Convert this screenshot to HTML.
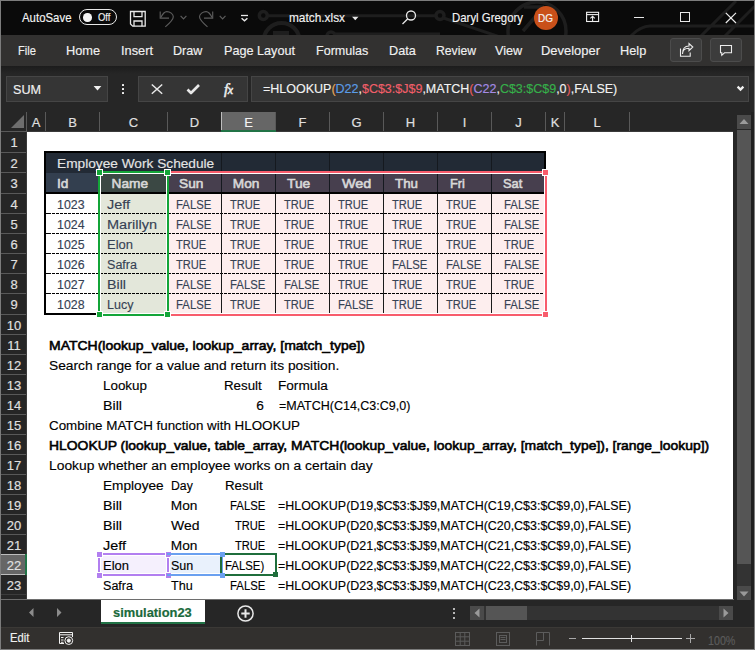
<!DOCTYPE html>
<html><head><meta charset="utf-8"><style>
html,body{margin:0;padding:0;width:755px;height:650px;overflow:hidden;background:#0a0a0a}
body>div{position:absolute}
.t{position:absolute;white-space:nowrap;font-family:"Liberation Sans",sans-serif;line-height:normal}
</style></head><body>
<div style="left:0px;top:0px;width:755px;height:650px;background:#7c7c7c"></div>
<div style="left:1px;top:1px;width:753px;height:34px;background:#0a0a0a"></div>
<svg style="position:absolute;left:1px;top:1px" width="753" height="34" viewBox="1 1 753 34">
<g stroke="#1e1e1e" stroke-width="3" fill="none">
<path d="M268 15.8 H 435.5" stroke-width="3"/><circle cx="263.3" cy="15.5" r="4" stroke-width="3.5"/>
<circle cx="440" cy="15.5" r="4" stroke-width="3.5"/><path d="M443.5 18 L 500 37" stroke-width="3"/><path d="M335 34 H 440" stroke-width="3"/>
<circle cx="281.6" cy="41" r="18" stroke-width="4"/><path d="M273 33 H289" stroke-width="4"/><circle cx="331" cy="36" r="4" stroke-width="3.5"/>
<circle cx="537" cy="31" r="29" stroke-width="3.5"/><path d="M 523 31 L 543 8 M 524 7 H 544" stroke-width="3.5"/>
<path d="M 630 37 Q 640 26 650 26 H 754 M 700 37 L 736 1 M 724 37 L 760 1"/>
</g></svg>
<div style="left:1px;top:35px;width:753px;height:31px;background:#323130"></div>
<div style="left:1px;top:66px;width:753px;height:46px;background:linear-gradient(#1c1c1c,#262626 8px,#262626)"></div>
<div style="left:1px;top:112px;width:736px;height:20px;background:#262626"></div>
<div style="left:1px;top:132px;width:26px;height:468px;background:#262626"></div>
<div style="left:27px;top:132px;width:706px;height:467px;background:#fff"></div>
<div style="left:733px;top:112px;width:21px;height:488px;background:#262626"></div>
<div style="left:1px;top:599px;width:753px;height:28px;background:#262626"></div>
<div style="left:1px;top:627px;width:753px;height:22px;background:#32302e"></div>
<div style="left:1px;top:627px;width:753px;height:1px;background:#3b3936"></div>
<div class="t" style="left:22.00px;top:10.23px;font-size:13px;color:#f3f3f3;-webkit-text-stroke:0.15px currentColor;transform:scaleX(0.8784);transform-origin:0 0;">AutoSave</div>
<div style="left:79px;top:9px;width:38px;height:16px;border:1.3px solid #e8e8e8;border-radius:8px;box-sizing:border-box"></div>
<div style="left:83px;top:13px;width:8.5px;height:8.5px;background:#f4f4f4;border-radius:50%"></div>
<div class="t" style="left:98.30px;top:11.09px;font-size:11.5px;color:#f3f3f3;-webkit-text-stroke:0.15px currentColor;transform:scaleX(0.8235);transform-origin:0 0;">Off</div>
<svg style="position:absolute;left:128px;top:9px" width="20" height="20" viewBox="0 0 20 20" fill="none" stroke="#e8e8e8" stroke-width="1.3">
<path d="M2.5 2.5 H17.2 V17.2 H4.7 L2.5 15 Z"/><path d="M6 2.5 V7.6 H14 V2.5"/><path d="M6 17.2 V12 H14 V17.2"/></svg>
<svg style="position:absolute;left:158px;top:9px" width="70" height="20" viewBox="0 0 70 20" fill="none" stroke="#5c5c5c" stroke-width="1.15">
<path d="M2.2 2.6 V9.1 H11"/><path d="M2.8 8.5 C4.5 5 7 2.6 8.8 2.6 C12 2.6 15.3 5 15.3 7.7 C15.3 10 13 13 7.3 17.9"/>
<path d="M22.6 6.9 L25.5 9.8 L28.4 6.9" stroke-width="1.2"/>
<path d="M54.7 2.6 V9.1 H46"/><path d="M54.1 8.5 C52.4 5 49.9 2.6 48.1 2.6 C45 2.6 41.5 5 41.5 7.7 C41.5 10 44 13 49.5 17.9"/>
<path d="M61.7 6.9 L64.6 9.8 L67.5 6.9" stroke-width="1.2"/></svg>
<svg style="position:absolute;left:240px;top:13px" width="10" height="9" viewBox="0 0 10 9" fill="none" stroke="#e8e8e8" stroke-width="1.3">
<path d="M1 2.5 H8"/><path d="M1.6 5.2 L4.5 7.7 L7.4 5.2" stroke-width="1.5"/></svg>
<div class="t" style="left:288.50px;top:10.23px;font-size:13px;color:#f3f3f3;-webkit-text-stroke:0.15px currentColor;transform:scaleX(0.9117);transform-origin:0 0;">match.xlsx</div>
<svg style="position:absolute;left:351px;top:16px" width="9" height="6"><path d="M1 0.8 H7.5 L4.25 4.3 Z" fill="#e8e8e8"/></svg>
<svg style="position:absolute;left:400px;top:9px" width="18" height="18" viewBox="0 0 18 18" fill="none" stroke="#e8e8e8" stroke-width="1.3">
<circle cx="11" cy="6.5" r="4.5"/><path d="M7.8 9.7 L2.5 15"/></svg>
<div class="t" style="left:451.50px;top:10.23px;font-size:13px;color:#f3f3f3;-webkit-text-stroke:0.15px currentColor;transform:scaleX(0.8774);transform-origin:0 0;">Daryl Gregory</div>
<div style="left:534px;top:6px;width:24px;height:24px;background:#c9501a;border-radius:50%"></div>
<div class="t" style="left:538.00px;top:11.59px;font-size:11.5px;color:#f4f4f4;-webkit-text-stroke:0.15px currentColor;transform:scaleX(0.8696);transform-origin:0 0;">DG</div>
<svg style="position:absolute;left:580px;top:6px" width="26" height="22" viewBox="580 6 26 22" fill="none" stroke="#f0f0f0" stroke-width="1.1">
<rect x="586.6" y="12.3" width="12" height="9.2"/><path d="M586.6 14.6 H598.6"/><path d="M592.6 21.5 V16.3 M590.4 18.4 L592.6 16.2 L594.8 18.4"/></svg>
<div style="left:634px;top:17px;width:10px;height:1px;background:#e8e8e8"></div>
<div style="left:680px;top:12px;width:10px;height:10px;border:1.2px solid #e8e8e8;box-sizing:border-box"></div>
<svg style="position:absolute;left:725px;top:12px" width="12" height="12" viewBox="0 0 12 12" stroke="#ececec" stroke-width="1.2"><path d="M0.8 0.8 L11 11 M11 0.8 L0.8 11"/></svg>
<div class="t" style="left:18.30px;top:43.23px;font-size:13px;color:#f0f0f0;-webkit-text-stroke:0.15px currentColor;transform:scaleX(0.8600);transform-origin:0 0;">File</div>
<div class="t" style="left:66.20px;top:43.23px;font-size:13px;color:#f0f0f0;-webkit-text-stroke:0.15px currentColor;transform:scaleX(0.9853);transform-origin:0 0;">Home</div>
<div class="t" style="left:120.90px;top:43.23px;font-size:13px;color:#f0f0f0;-webkit-text-stroke:0.15px currentColor;transform:scaleX(0.9846);transform-origin:0 0;">Insert</div>
<div class="t" style="left:173.20px;top:43.23px;font-size:13px;color:#f0f0f0;-webkit-text-stroke:0.15px currentColor;transform:scaleX(0.9685);transform-origin:0 0;">Draw</div>
<div class="t" style="left:224.20px;top:43.23px;font-size:13px;color:#f0f0f0;-webkit-text-stroke:0.15px currentColor;transform:scaleX(0.9727);transform-origin:0 0;">Page Layout</div>
<div class="t" style="left:316.00px;top:43.23px;font-size:13px;color:#f0f0f0;-webkit-text-stroke:0.15px currentColor;transform:scaleX(0.9666);transform-origin:0 0;">Formulas</div>
<div class="t" style="left:389.00px;top:43.23px;font-size:13px;color:#f0f0f0;-webkit-text-stroke:0.15px currentColor;transform:scaleX(0.9747);transform-origin:0 0;">Data</div>
<div class="t" style="left:436.00px;top:43.23px;font-size:13px;color:#f0f0f0;-webkit-text-stroke:0.15px currentColor;transform:scaleX(0.9381);transform-origin:0 0;">Review</div>
<div class="t" style="left:494.60px;top:43.23px;font-size:13px;color:#f0f0f0;-webkit-text-stroke:0.15px currentColor;transform:scaleX(0.9767);transform-origin:0 0;">View</div>
<div class="t" style="left:541.20px;top:43.23px;font-size:13px;color:#f0f0f0;-webkit-text-stroke:0.15px currentColor;transform:scaleX(0.9953);transform-origin:0 0;">Developer</div>
<div class="t" style="left:620.30px;top:43.23px;font-size:13px;color:#f0f0f0;-webkit-text-stroke:0.15px currentColor;transform:scaleX(0.9807);transform-origin:0 0;">Help</div>
<div style="left:670px;top:38px;width:32px;height:24px;background:#3c3c3c;border:1px solid #4c4c4c;box-sizing:border-box;border-radius:3px"></div>
<div style="left:710px;top:38px;width:32px;height:24px;background:#3c3c3c;border:1px solid #4c4c4c;box-sizing:border-box;border-radius:3px"></div>
<svg style="position:absolute;left:670px;top:38px" width="72" height="24" viewBox="670 38 72 24" fill="none" stroke="#ececec" stroke-width="1.1">
<path d="M680.5 48.5 V56.2 H690.2 V52.5"/><path d="M682.5 54 C682.5 50 685 48.2 689 48.2 V50.6 L692.8 47 L689 43.6 V46 C685 46 682.5 49 682.5 54"/>
<path d="M720.5 45.5 H731.5 V52.8 H724.5 L721.8 55.3 V52.8 H720.5 Z"/></svg>
<div style="left:6px;top:76px;width:102px;height:26px;background:#353535;border:1px solid #454545;box-sizing:border-box"></div>
<div class="t" style="left:13.00px;top:81.83px;font-size:13px;color:#f0f0f0;-webkit-text-stroke:0.15px currentColor;transform:scaleX(0.9702);transform-origin:0 0;">SUM</div>
<svg style="position:absolute;left:93px;top:86px" width="9" height="5"><path d="M0.6 0 H8.4 L4.5 4.5 Z" fill="#f0f0f0"/></svg>
<div style="left:122px;top:84px;width:2.4px;height:2.4px;background:#f4f4f4;border-radius:0.5px"></div>
<div style="left:122px;top:88px;width:2.4px;height:2.4px;background:#f4f4f4;border-radius:0.5px"></div>
<div style="left:122px;top:92px;width:2.4px;height:2.4px;background:#f4f4f4;border-radius:0.5px"></div>
<div style="left:138px;top:76px;width:110px;height:26px;background:#353535;border:1px solid #454545;box-sizing:border-box"></div>
<svg style="position:absolute;left:150px;top:83px" width="14" height="14" viewBox="0 0 14 14" stroke="#e8e8e8" stroke-width="1.5"><path d="M1.8 1.5 L12.2 10.8 M12.2 1.5 L1.8 10.8"/></svg>
<svg style="position:absolute;left:185px;top:83px" width="16" height="14" viewBox="0 0 16 14" fill="none" stroke="#e8e8e8" stroke-width="2.6" stroke-linejoin="round"><path d="M2.5 6.5 L6 10 L14 2"/></svg>
<div class="t" style="left:224px;top:80px;font-family:'Liberation Serif',serif;font-style:italic;font-size:15.5px;color:#ececec;-webkit-text-stroke:0.5px #ececec;letter-spacing:-0.5px">f<span style="font-size:12px">x</span></div>
<div style="left:251px;top:76px;width:498px;height:26px;background:#353535;border:1px solid #454545;box-sizing:border-box"></div>
<div class="t" style="left:263.40px;top:80.80px;font-size:13.7px;color:#f3f3f3;-webkit-text-stroke:0.15px currentColor;transform:scaleX(0.9126);transform-origin:0 0;"><span style="color:#f3f3f3">=HLOOKUP</span><span style="color:#e6a85a">(</span><span style="color:#5b9de8">D22</span><span style="color:#f3f3f3">,</span><span style="color:#f25f6a">$C$3:$J$9</span><span style="color:#f3f3f3">,MATCH</span><span style="color:#e85a60">(</span><span style="color:#a58be6">C22</span><span style="color:#f3f3f3">,</span><span style="color:#35b04a">C$3:$C$9</span><span style="color:#f3f3f3">,0</span><span style="color:#e85a60">)</span><span style="color:#f3f3f3">,FALSE)</span></div>
<svg style="position:absolute;left:735px;top:84px" width="11" height="9"><path d="M2.6 2.6 L5.5 5.5 L8.4 2.6" fill="none" stroke="#f0f0f0" stroke-width="2.3"/></svg>
<div style="left:26px;top:112px;width:1px;height:19px;background:#595959"></div>
<div style="left:45px;top:112px;width:1px;height:19px;background:#595959"></div>
<div style="left:99px;top:112px;width:1px;height:19px;background:#595959"></div>
<div style="left:167px;top:112px;width:1px;height:19px;background:#595959"></div>
<div style="left:221px;top:112px;width:1px;height:19px;background:#595959"></div>
<div style="left:275px;top:112px;width:1px;height:19px;background:#595959"></div>
<div style="left:329px;top:112px;width:1px;height:19px;background:#595959"></div>
<div style="left:383px;top:112px;width:1px;height:19px;background:#595959"></div>
<div style="left:437px;top:112px;width:1px;height:19px;background:#595959"></div>
<div style="left:491px;top:112px;width:1px;height:19px;background:#595959"></div>
<div style="left:545px;top:112px;width:1px;height:19px;background:#595959"></div>
<div style="left:564px;top:112px;width:1px;height:19px;background:#595959"></div>
<div style="left:629px;top:112px;width:1px;height:19px;background:#595959"></div>
<div style="left:27px;top:131px;width:706px;height:1px;background:#3a3a3a"></div>
<svg style="position:absolute;left:10px;top:114px" width="15" height="15"><path d="M14 1 V14 H1 Z" fill="#6e6e6e"/></svg>
<div style="left:222px;top:112px;width:53px;height:19px;background:#666666"></div>
<div style="left:221px;top:112px;width:1px;height:18px;background:#bdbdbd"></div>
<div style="left:221px;top:130px;width:55px;height:2px;background:#217346"></div>
<div class="t" style="left:31.66px;top:115.23px;font-size:13px;color:#e0e0e0;-webkit-text-stroke:0.15px currentColor;">A</div>
<div class="t" style="left:68.16px;top:115.23px;font-size:13px;color:#e0e0e0;-webkit-text-stroke:0.15px currentColor;">B</div>
<div class="t" style="left:128.81px;top:115.23px;font-size:13px;color:#e0e0e0;-webkit-text-stroke:0.15px currentColor;">C</div>
<div class="t" style="left:189.81px;top:115.23px;font-size:13px;color:#e0e0e0;-webkit-text-stroke:0.15px currentColor;">D</div>
<div class="t" style="left:244.16px;top:115.23px;font-size:13px;color:#f4f4f4;-webkit-text-stroke:0.15px currentColor;">E</div>
<div class="t" style="left:298.53px;top:115.23px;font-size:13px;color:#e0e0e0;-webkit-text-stroke:0.15px currentColor;">F</div>
<div class="t" style="left:351.44px;top:115.23px;font-size:13px;color:#e0e0e0;-webkit-text-stroke:0.15px currentColor;">G</div>
<div class="t" style="left:405.81px;top:115.23px;font-size:13px;color:#e0e0e0;-webkit-text-stroke:0.15px currentColor;">H</div>
<div class="t" style="left:462.69px;top:115.23px;font-size:13px;color:#e0e0e0;-webkit-text-stroke:0.15px currentColor;">I</div>
<div class="t" style="left:515.25px;top:115.23px;font-size:13px;color:#e0e0e0;-webkit-text-stroke:0.15px currentColor;">J</div>
<div class="t" style="left:550.66px;top:115.23px;font-size:13px;color:#e0e0e0;-webkit-text-stroke:0.15px currentColor;">K</div>
<div class="t" style="left:593.38px;top:115.23px;font-size:13px;color:#e0e0e0;-webkit-text-stroke:0.15px currentColor;">L</div>
<div style="left:1px;top:131px;width:26px;height:1px;background:#595959"></div>
<div style="left:1px;top:152px;width:26px;height:1px;background:#595959"></div>
<div style="left:1px;top:172px;width:26px;height:1px;background:#595959"></div>
<div style="left:1px;top:193px;width:26px;height:1px;background:#595959"></div>
<div style="left:1px;top:213px;width:26px;height:1px;background:#595959"></div>
<div style="left:1px;top:233px;width:26px;height:1px;background:#595959"></div>
<div style="left:1px;top:253px;width:26px;height:1px;background:#595959"></div>
<div style="left:1px;top:273px;width:26px;height:1px;background:#595959"></div>
<div style="left:1px;top:293px;width:26px;height:1px;background:#595959"></div>
<div style="left:1px;top:314px;width:26px;height:1px;background:#595959"></div>
<div style="left:1px;top:334px;width:26px;height:1px;background:#595959"></div>
<div style="left:1px;top:354px;width:26px;height:1px;background:#595959"></div>
<div style="left:1px;top:374px;width:26px;height:1px;background:#595959"></div>
<div style="left:1px;top:394px;width:26px;height:1px;background:#595959"></div>
<div style="left:1px;top:414px;width:26px;height:1px;background:#595959"></div>
<div style="left:1px;top:434px;width:26px;height:1px;background:#595959"></div>
<div style="left:1px;top:454px;width:26px;height:1px;background:#595959"></div>
<div style="left:1px;top:474px;width:26px;height:1px;background:#595959"></div>
<div style="left:1px;top:494px;width:26px;height:1px;background:#595959"></div>
<div style="left:1px;top:514px;width:26px;height:1px;background:#595959"></div>
<div style="left:1px;top:534px;width:26px;height:1px;background:#595959"></div>
<div style="left:1px;top:554px;width:26px;height:1px;background:#595959"></div>
<div style="left:1px;top:574px;width:26px;height:1px;background:#595959"></div>
<div style="left:1px;top:594px;width:26px;height:1px;background:#595959"></div>
<div style="left:26px;top:132px;width:1px;height:468px;background:#3a3a3a"></div>
<div style="left:1px;top:555px;width:25px;height:19px;background:#666666"></div>
<div style="left:1px;top:554px;width:26px;height:1px;background:#bdbdbd"></div>
<div style="left:1px;top:574px;width:26px;height:1px;background:#bdbdbd"></div>
<div style="left:25px;top:554px;width:2px;height:21px;background:#217346"></div>
<div class="t" style="left:10.38px;top:134.74px;font-size:13px;color:#e0e0e0;-webkit-text-stroke:0.15px currentColor;">1</div>
<div class="t" style="left:10.38px;top:155.74px;font-size:13px;color:#e0e0e0;-webkit-text-stroke:0.15px currentColor;">2</div>
<div class="t" style="left:10.38px;top:175.74px;font-size:13px;color:#e0e0e0;-webkit-text-stroke:0.15px currentColor;">3</div>
<div class="t" style="left:10.38px;top:196.74px;font-size:13px;color:#e0e0e0;-webkit-text-stroke:0.15px currentColor;">4</div>
<div class="t" style="left:10.38px;top:216.74px;font-size:13px;color:#e0e0e0;-webkit-text-stroke:0.15px currentColor;">5</div>
<div class="t" style="left:10.38px;top:236.74px;font-size:13px;color:#e0e0e0;-webkit-text-stroke:0.15px currentColor;">6</div>
<div class="t" style="left:10.38px;top:256.74px;font-size:13px;color:#e0e0e0;-webkit-text-stroke:0.15px currentColor;">7</div>
<div class="t" style="left:10.38px;top:276.74px;font-size:13px;color:#e0e0e0;-webkit-text-stroke:0.15px currentColor;">8</div>
<div class="t" style="left:10.38px;top:296.74px;font-size:13px;color:#e0e0e0;-webkit-text-stroke:0.15px currentColor;">9</div>
<div class="t" style="left:6.77px;top:317.74px;font-size:13px;color:#e0e0e0;-webkit-text-stroke:0.15px currentColor;">10</div>
<div class="t" style="left:7.25px;top:337.74px;font-size:13px;color:#e0e0e0;-webkit-text-stroke:0.15px currentColor;">11</div>
<div class="t" style="left:6.77px;top:357.74px;font-size:13px;color:#e0e0e0;-webkit-text-stroke:0.15px currentColor;">12</div>
<div class="t" style="left:6.77px;top:377.74px;font-size:13px;color:#e0e0e0;-webkit-text-stroke:0.15px currentColor;">13</div>
<div class="t" style="left:6.77px;top:397.74px;font-size:13px;color:#e0e0e0;-webkit-text-stroke:0.15px currentColor;">14</div>
<div class="t" style="left:6.77px;top:417.74px;font-size:13px;color:#e0e0e0;-webkit-text-stroke:0.15px currentColor;">15</div>
<div class="t" style="left:6.77px;top:437.74px;font-size:13px;color:#e0e0e0;-webkit-text-stroke:0.15px currentColor;">16</div>
<div class="t" style="left:6.77px;top:457.74px;font-size:13px;color:#e0e0e0;-webkit-text-stroke:0.15px currentColor;">17</div>
<div class="t" style="left:6.77px;top:477.74px;font-size:13px;color:#e0e0e0;-webkit-text-stroke:0.15px currentColor;">18</div>
<div class="t" style="left:6.77px;top:497.74px;font-size:13px;color:#e0e0e0;-webkit-text-stroke:0.15px currentColor;">19</div>
<div class="t" style="left:6.77px;top:517.74px;font-size:13px;color:#e0e0e0;-webkit-text-stroke:0.15px currentColor;">20</div>
<div class="t" style="left:6.77px;top:537.74px;font-size:13px;color:#e0e0e0;-webkit-text-stroke:0.15px currentColor;">21</div>
<div class="t" style="left:6.77px;top:557.74px;font-size:13px;color:#e0e0e0;-webkit-text-stroke:0.15px currentColor;">22</div>
<div class="t" style="left:6.77px;top:577.74px;font-size:13px;color:#e0e0e0;-webkit-text-stroke:0.15px currentColor;">23</div>
<div style="left:46px;top:153px;width:499px;height:20px;background:#222a35"></div>
<div style="left:46px;top:173px;width:499px;height:20px;background:#333f4f"></div>
<div style="left:101px;top:173px;width:66px;height:20px;background:#3b4844"></div>
<div style="left:169px;top:173px;width:375px;height:20px;background:#473f4e"></div>
<div style="left:101px;top:194px;width:66px;height:120px;background:#e3e7da"></div>
<div style="left:169px;top:194px;width:375px;height:120px;background:#fdeeee"></div>
<div style="left:221px;top:153px;width:1px;height:40px;background:#15191f"></div>
<div style="left:275px;top:153px;width:1px;height:40px;background:#15191f"></div>
<div style="left:329px;top:153px;width:1px;height:40px;background:#15191f"></div>
<div style="left:383px;top:153px;width:1px;height:40px;background:#15191f"></div>
<div style="left:437px;top:153px;width:1px;height:40px;background:#15191f"></div>
<div style="left:491px;top:153px;width:1px;height:40px;background:#15191f"></div>
<div style="left:99px;top:173px;width:1px;height:20px;background:#15191f"></div>
<div style="left:167px;top:173px;width:1px;height:20px;background:#15191f"></div>
<div style="left:46px;top:213px;width:498px;height:1px;background:repeating-linear-gradient(to right,#000 0 3px,transparent 3px 4px);background-position:2px 0"></div>
<div style="left:46px;top:233px;width:498px;height:1px;background:repeating-linear-gradient(to right,#000 0 3px,transparent 3px 4px);background-position:2px 0"></div>
<div style="left:46px;top:253px;width:498px;height:1px;background:repeating-linear-gradient(to right,#000 0 3px,transparent 3px 4px);background-position:2px 0"></div>
<div style="left:46px;top:273px;width:498px;height:1px;background:repeating-linear-gradient(to right,#000 0 3px,transparent 3px 4px);background-position:2px 0"></div>
<div style="left:46px;top:293px;width:498px;height:1px;background:repeating-linear-gradient(to right,#000 0 3px,transparent 3px 4px);background-position:2px 0"></div>
<div style="left:221px;top:194px;width:1px;height:119px;background:#1a1a1a"></div>
<div style="left:275px;top:194px;width:1px;height:119px;background:#1a1a1a"></div>
<div style="left:329px;top:194px;width:1px;height:119px;background:#1a1a1a"></div>
<div style="left:383px;top:194px;width:1px;height:119px;background:#1a1a1a"></div>
<div style="left:437px;top:194px;width:1px;height:119px;background:#1a1a1a"></div>
<div style="left:491px;top:194px;width:1px;height:119px;background:#1a1a1a"></div>
<div style="left:44px;top:151px;width:502px;height:2px;background:#000"></div>
<div style="left:44px;top:151px;width:2px;height:164px;background:#000"></div>
<div style="left:544px;top:151px;width:2px;height:22px;background:#000"></div>
<div style="left:44px;top:192px;width:500px;height:2px;background:#000"></div>
<div style="left:44px;top:313px;width:54px;height:2px;background:#000"></div>
<div class="t" style="left:57.00px;top:155.90px;font-size:13.7px;color:#e4e4e4;-webkit-text-stroke:0.15px currentColor;">Employee Work Schedule</div>
<div class="t" style="left:57.00px;top:176.10px;font-size:13.7px;color:#d8d8d8;-webkit-text-stroke:0.6px currentColor;">Id</div>
<div class="t" style="left:111.50px;top:176.10px;font-size:13.7px;color:#d8d8d8;-webkit-text-stroke:0.6px currentColor;">Name</div>
<div class="t" style="left:179.00px;top:176.10px;font-size:13.7px;color:#d8d8d8;-webkit-text-stroke:0.6px currentColor;">Sun</div>
<div class="t" style="left:232.80px;top:176.10px;font-size:13.7px;color:#d8d8d8;-webkit-text-stroke:0.6px currentColor;">Mon</div>
<div class="t" style="left:286.70px;top:176.10px;font-size:13.7px;color:#d8d8d8;-webkit-text-stroke:0.6px currentColor;transform:scaleX(1.0093);transform-origin:0 0;">Tue</div>
<div class="t" style="left:341.60px;top:176.10px;font-size:13.7px;color:#d8d8d8;-webkit-text-stroke:0.6px currentColor;transform:scaleX(1.0484);transform-origin:0 0;">Wed</div>
<div class="t" style="left:395.40px;top:176.10px;font-size:13.7px;color:#d8d8d8;-webkit-text-stroke:0.6px currentColor;transform:scaleX(0.9732);transform-origin:0 0;">Thu</div>
<div class="t" style="left:449.90px;top:176.10px;font-size:13.7px;color:#d8d8d8;-webkit-text-stroke:0.6px currentColor;transform:scaleX(0.9273);transform-origin:0 0;">Fri</div>
<div class="t" style="left:502.90px;top:176.10px;font-size:13.7px;color:#d8d8d8;-webkit-text-stroke:0.6px currentColor;transform:scaleX(0.9392);transform-origin:0 0;">Sat</div>
<div class="t" style="left:57.20px;top:196.60px;font-size:13.7px;color:#364254;-webkit-text-stroke:0.15px currentColor;transform:scaleX(0.9054);transform-origin:0 0;">1023</div>
<div class="t" style="left:107.40px;top:196.60px;font-size:13.7px;color:#364254;-webkit-text-stroke:0.15px currentColor;transform:scaleX(1.0571);transform-origin:0 0;">Jeff</div>
<div class="t" style="left:175.50px;top:196.60px;font-size:13.7px;color:#364254;-webkit-text-stroke:0.15px currentColor;transform:scaleX(0.8295);transform-origin:0 0;">FALSE</div>
<div class="t" style="left:229.50px;top:196.60px;font-size:13.7px;color:#364254;-webkit-text-stroke:0.15px currentColor;transform:scaleX(0.8131);transform-origin:0 0;">TRUE</div>
<div class="t" style="left:284.00px;top:196.60px;font-size:13.7px;color:#364254;-webkit-text-stroke:0.15px currentColor;transform:scaleX(0.8131);transform-origin:0 0;">TRUE</div>
<div class="t" style="left:338.00px;top:196.60px;font-size:13.7px;color:#364254;-webkit-text-stroke:0.15px currentColor;transform:scaleX(0.8131);transform-origin:0 0;">TRUE</div>
<div class="t" style="left:392.00px;top:196.60px;font-size:13.7px;color:#364254;-webkit-text-stroke:0.15px currentColor;transform:scaleX(0.8131);transform-origin:0 0;">TRUE</div>
<div class="t" style="left:445.50px;top:196.60px;font-size:13.7px;color:#364254;-webkit-text-stroke:0.15px currentColor;transform:scaleX(0.8131);transform-origin:0 0;">TRUE</div>
<div class="t" style="left:503.70px;top:196.60px;font-size:13.7px;color:#364254;-webkit-text-stroke:0.15px currentColor;transform:scaleX(0.8295);transform-origin:0 0;">FALSE</div>
<div class="t" style="left:57.20px;top:216.60px;font-size:13.7px;color:#364254;-webkit-text-stroke:0.15px currentColor;transform:scaleX(0.9054);transform-origin:0 0;">1024</div>
<div class="t" style="left:107.40px;top:216.60px;font-size:13.7px;color:#364254;-webkit-text-stroke:0.15px currentColor;transform:scaleX(1.0615);transform-origin:0 0;">Marillyn</div>
<div class="t" style="left:175.50px;top:216.60px;font-size:13.7px;color:#364254;-webkit-text-stroke:0.15px currentColor;transform:scaleX(0.8295);transform-origin:0 0;">FALSE</div>
<div class="t" style="left:229.50px;top:216.60px;font-size:13.7px;color:#364254;-webkit-text-stroke:0.15px currentColor;transform:scaleX(0.8131);transform-origin:0 0;">TRUE</div>
<div class="t" style="left:284.00px;top:216.60px;font-size:13.7px;color:#364254;-webkit-text-stroke:0.15px currentColor;transform:scaleX(0.8131);transform-origin:0 0;">TRUE</div>
<div class="t" style="left:338.00px;top:216.60px;font-size:13.7px;color:#364254;-webkit-text-stroke:0.15px currentColor;transform:scaleX(0.8131);transform-origin:0 0;">TRUE</div>
<div class="t" style="left:392.00px;top:216.60px;font-size:13.7px;color:#364254;-webkit-text-stroke:0.15px currentColor;transform:scaleX(0.8131);transform-origin:0 0;">TRUE</div>
<div class="t" style="left:445.50px;top:216.60px;font-size:13.7px;color:#364254;-webkit-text-stroke:0.15px currentColor;transform:scaleX(0.8131);transform-origin:0 0;">TRUE</div>
<div class="t" style="left:503.70px;top:216.60px;font-size:13.7px;color:#364254;-webkit-text-stroke:0.15px currentColor;transform:scaleX(0.8295);transform-origin:0 0;">FALSE</div>
<div class="t" style="left:57.20px;top:236.60px;font-size:13.7px;color:#364254;-webkit-text-stroke:0.15px currentColor;transform:scaleX(0.9054);transform-origin:0 0;">1025</div>
<div class="t" style="left:107.40px;top:236.60px;font-size:13.7px;color:#364254;-webkit-text-stroke:0.15px currentColor;transform:scaleX(0.9489);transform-origin:0 0;">Elon</div>
<div class="t" style="left:175.50px;top:236.60px;font-size:13.7px;color:#364254;-webkit-text-stroke:0.15px currentColor;transform:scaleX(0.8131);transform-origin:0 0;">TRUE</div>
<div class="t" style="left:229.50px;top:236.60px;font-size:13.7px;color:#364254;-webkit-text-stroke:0.15px currentColor;transform:scaleX(0.8131);transform-origin:0 0;">TRUE</div>
<div class="t" style="left:284.00px;top:236.60px;font-size:13.7px;color:#364254;-webkit-text-stroke:0.15px currentColor;transform:scaleX(0.8131);transform-origin:0 0;">TRUE</div>
<div class="t" style="left:338.00px;top:236.60px;font-size:13.7px;color:#364254;-webkit-text-stroke:0.15px currentColor;transform:scaleX(0.8131);transform-origin:0 0;">TRUE</div>
<div class="t" style="left:392.00px;top:236.60px;font-size:13.7px;color:#364254;-webkit-text-stroke:0.15px currentColor;transform:scaleX(0.8131);transform-origin:0 0;">TRUE</div>
<div class="t" style="left:445.50px;top:236.60px;font-size:13.7px;color:#364254;-webkit-text-stroke:0.15px currentColor;transform:scaleX(0.8131);transform-origin:0 0;">TRUE</div>
<div class="t" style="left:503.70px;top:236.60px;font-size:13.7px;color:#364254;-webkit-text-stroke:0.15px currentColor;transform:scaleX(0.8131);transform-origin:0 0;">TRUE</div>
<div class="t" style="left:57.20px;top:256.60px;font-size:13.7px;color:#364254;-webkit-text-stroke:0.15px currentColor;transform:scaleX(0.9054);transform-origin:0 0;">1026</div>
<div class="t" style="left:107.40px;top:256.60px;font-size:13.7px;color:#364254;-webkit-text-stroke:0.15px currentColor;transform:scaleX(0.9174);transform-origin:0 0;">Safra</div>
<div class="t" style="left:175.50px;top:256.60px;font-size:13.7px;color:#364254;-webkit-text-stroke:0.15px currentColor;transform:scaleX(0.8131);transform-origin:0 0;">TRUE</div>
<div class="t" style="left:229.50px;top:256.60px;font-size:13.7px;color:#364254;-webkit-text-stroke:0.15px currentColor;transform:scaleX(0.8131);transform-origin:0 0;">TRUE</div>
<div class="t" style="left:284.00px;top:256.60px;font-size:13.7px;color:#364254;-webkit-text-stroke:0.15px currentColor;transform:scaleX(0.8131);transform-origin:0 0;">TRUE</div>
<div class="t" style="left:338.00px;top:256.60px;font-size:13.7px;color:#364254;-webkit-text-stroke:0.15px currentColor;transform:scaleX(0.8131);transform-origin:0 0;">TRUE</div>
<div class="t" style="left:392.00px;top:256.60px;font-size:13.7px;color:#364254;-webkit-text-stroke:0.15px currentColor;transform:scaleX(0.8295);transform-origin:0 0;">FALSE</div>
<div class="t" style="left:445.50px;top:256.60px;font-size:13.7px;color:#364254;-webkit-text-stroke:0.15px currentColor;transform:scaleX(0.8295);transform-origin:0 0;">FALSE</div>
<div class="t" style="left:503.70px;top:256.60px;font-size:13.7px;color:#364254;-webkit-text-stroke:0.15px currentColor;transform:scaleX(0.8295);transform-origin:0 0;">FALSE</div>
<div class="t" style="left:57.20px;top:276.60px;font-size:13.7px;color:#364254;-webkit-text-stroke:0.15px currentColor;transform:scaleX(0.9054);transform-origin:0 0;">1027</div>
<div class="t" style="left:107.40px;top:276.60px;font-size:13.7px;color:#364254;-webkit-text-stroke:0.15px currentColor;transform:scaleX(1.0388);transform-origin:0 0;">Bill</div>
<div class="t" style="left:175.50px;top:276.60px;font-size:13.7px;color:#364254;-webkit-text-stroke:0.15px currentColor;transform:scaleX(0.8295);transform-origin:0 0;">FALSE</div>
<div class="t" style="left:229.50px;top:276.60px;font-size:13.7px;color:#364254;-webkit-text-stroke:0.15px currentColor;transform:scaleX(0.8295);transform-origin:0 0;">FALSE</div>
<div class="t" style="left:284.00px;top:276.60px;font-size:13.7px;color:#364254;-webkit-text-stroke:0.15px currentColor;transform:scaleX(0.8295);transform-origin:0 0;">FALSE</div>
<div class="t" style="left:338.00px;top:276.60px;font-size:13.7px;color:#364254;-webkit-text-stroke:0.15px currentColor;transform:scaleX(0.8131);transform-origin:0 0;">TRUE</div>
<div class="t" style="left:392.00px;top:276.60px;font-size:13.7px;color:#364254;-webkit-text-stroke:0.15px currentColor;transform:scaleX(0.8131);transform-origin:0 0;">TRUE</div>
<div class="t" style="left:445.50px;top:276.60px;font-size:13.7px;color:#364254;-webkit-text-stroke:0.15px currentColor;transform:scaleX(0.8131);transform-origin:0 0;">TRUE</div>
<div class="t" style="left:503.70px;top:276.60px;font-size:13.7px;color:#364254;-webkit-text-stroke:0.15px currentColor;transform:scaleX(0.8131);transform-origin:0 0;">TRUE</div>
<div class="t" style="left:57.20px;top:296.60px;font-size:13.7px;color:#364254;-webkit-text-stroke:0.15px currentColor;transform:scaleX(0.9054);transform-origin:0 0;">1028</div>
<div class="t" style="left:107.40px;top:296.60px;font-size:13.7px;color:#364254;-webkit-text-stroke:0.15px currentColor;transform:scaleX(0.9133);transform-origin:0 0;">Lucy</div>
<div class="t" style="left:175.50px;top:296.60px;font-size:13.7px;color:#364254;-webkit-text-stroke:0.15px currentColor;transform:scaleX(0.8295);transform-origin:0 0;">FALSE</div>
<div class="t" style="left:229.50px;top:296.60px;font-size:13.7px;color:#364254;-webkit-text-stroke:0.15px currentColor;transform:scaleX(0.8131);transform-origin:0 0;">TRUE</div>
<div class="t" style="left:284.00px;top:296.60px;font-size:13.7px;color:#364254;-webkit-text-stroke:0.15px currentColor;transform:scaleX(0.8131);transform-origin:0 0;">TRUE</div>
<div class="t" style="left:338.00px;top:296.60px;font-size:13.7px;color:#364254;-webkit-text-stroke:0.15px currentColor;transform:scaleX(0.8295);transform-origin:0 0;">FALSE</div>
<div class="t" style="left:392.00px;top:296.60px;font-size:13.7px;color:#364254;-webkit-text-stroke:0.15px currentColor;transform:scaleX(0.8131);transform-origin:0 0;">TRUE</div>
<div class="t" style="left:445.50px;top:296.60px;font-size:13.7px;color:#364254;-webkit-text-stroke:0.15px currentColor;transform:scaleX(0.8131);transform-origin:0 0;">TRUE</div>
<div class="t" style="left:503.70px;top:296.60px;font-size:13.7px;color:#364254;-webkit-text-stroke:0.15px currentColor;transform:scaleX(0.8295);transform-origin:0 0;">FALSE</div>
<div style="left:98px;top:171px;width:2px;height:144px;background:#13a538"></div>
<div style="left:167px;top:171px;width:2px;height:144px;background:#13a538"></div>
<div style="left:98px;top:171px;width:71px;height:2px;background:#13a538"></div>
<div style="left:98px;top:314px;width:71px;height:2px;background:#13a538"></div>
<div style="left:100px;top:173px;width:1px;height:141px;background:#fff"></div>
<div style="left:100px;top:173px;width:67px;height:1px;background:#fff"></div>
<div style="left:166px;top:173px;width:1px;height:141px;background:#fff"></div>
<div style="left:100px;top:313px;width:67px;height:1px;background:#fff"></div>
<div style="left:169px;top:171px;width:377px;height:2px;background:#f85c6c"></div>
<div style="left:545px;top:171px;width:2px;height:144px;background:#f85c6c"></div>
<div style="left:169px;top:314px;width:378px;height:2px;background:#f85c6c"></div>
<div style="left:544px;top:173px;width:1px;height:141px;background:#fff"></div>
<div style="left:169px;top:173px;width:375px;height:1px;background:#fff"></div>
<div style="left:169px;top:313px;width:375px;height:1px;background:#fff"></div>
<div style="left:96px;top:169px;width:7px;height:7px;background:#fff"></div>
<div style="left:97px;top:170px;width:5px;height:5px;background:#13a538"></div>
<div style="left:164px;top:169px;width:7px;height:7px;background:#fff"></div>
<div style="left:165px;top:170px;width:5px;height:5px;background:#13a538"></div>
<div style="left:96px;top:311px;width:7px;height:7px;background:#fff"></div>
<div style="left:97px;top:312px;width:5px;height:5px;background:#13a538"></div>
<div style="left:164px;top:311px;width:7px;height:7px;background:#fff"></div>
<div style="left:165px;top:312px;width:5px;height:5px;background:#13a538"></div>
<div style="left:542px;top:169px;width:7px;height:7px;background:#fff"></div>
<div style="left:543px;top:170px;width:5px;height:5px;background:#f85c6c"></div>
<div style="left:542px;top:311px;width:7px;height:7px;background:#fff"></div>
<div style="left:543px;top:312px;width:5px;height:5px;background:#f85c6c"></div>
<div class="t" style="left:48.60px;top:337.60px;font-size:13.7px;color:#000;-webkit-text-stroke:0.6px currentColor;transform:scaleX(1.0223);transform-origin:0 0;">MATCH(lookup_value, lookup_array, [match_type])</div>
<div class="t" style="left:48.60px;top:357.60px;font-size:13.7px;color:#000;-webkit-text-stroke:0.15px currentColor;transform:scaleX(1.0064);transform-origin:0 0;">Search range for a value and return its position.</div>
<div class="t" style="left:102.50px;top:377.60px;font-size:13.7px;color:#000;-webkit-text-stroke:0.15px currentColor;transform:scaleX(0.9792);transform-origin:0 0;">Lookup</div>
<div class="t" style="left:224.20px;top:377.60px;font-size:13.7px;color:#000;-webkit-text-stroke:0.15px currentColor;transform:scaleX(0.9732);transform-origin:0 0;">Result</div>
<div class="t" style="left:278.30px;top:377.60px;font-size:13.7px;color:#000;-webkit-text-stroke:0.15px currentColor;transform:scaleX(0.9925);transform-origin:0 0;">Formula</div>
<div class="t" style="left:102.50px;top:397.60px;font-size:13.7px;color:#000;-webkit-text-stroke:0.15px currentColor;transform:scaleX(1.0388);transform-origin:0 0;">Bill</div>
<div class="t" style="left:256.20px;top:397.60px;font-size:13.7px;color:#000;-webkit-text-stroke:0.15px currentColor;">6</div>
<div class="t" style="left:278.60px;top:397.60px;font-size:13.7px;color:#000;-webkit-text-stroke:0.15px currentColor;transform:scaleX(0.9126);transform-origin:0 0;">=MATCH(C14,C3:C9,0)</div>
<div class="t" style="left:48.60px;top:417.60px;font-size:13.7px;color:#000;-webkit-text-stroke:0.15px currentColor;transform:scaleX(0.9771);transform-origin:0 0;">Combine MATCH function with HLOOKUP</div>
<div class="t" style="left:48.60px;top:437.60px;font-size:13.7px;color:#000;-webkit-text-stroke:0.6px currentColor;transform:scaleX(1.0153);transform-origin:0 0;">HLOOKUP (lookup_value, table_array, MATCH(lookup_value, lookup_array, [match_type]), [range_lookup])</div>
<div class="t" style="left:48.60px;top:457.60px;font-size:13.7px;color:#000;-webkit-text-stroke:0.15px currentColor;transform:scaleX(1.0105);transform-origin:0 0;">Lookup whether an employee works on a certain day</div>
<div class="t" style="left:102.50px;top:477.60px;font-size:13.7px;color:#000;-webkit-text-stroke:0.15px currentColor;transform:scaleX(0.9968);transform-origin:0 0;">Employee</div>
<div class="t" style="left:170.80px;top:477.60px;font-size:13.7px;color:#000;-webkit-text-stroke:0.15px currentColor;transform:scaleX(0.8940);transform-origin:0 0;">Day</div>
<div class="t" style="left:224.70px;top:477.60px;font-size:13.7px;color:#000;-webkit-text-stroke:0.15px currentColor;transform:scaleX(0.9732);transform-origin:0 0;">Result</div>
<div style="left:101px;top:556px;width:65px;height:17px;background:#f5f0fd"></div>
<div style="left:98px;top:553px;width:71px;height:2px;background:#b27ff0"></div>
<div style="left:98px;top:574px;width:71px;height:2px;background:#b27ff0"></div>
<div style="left:98px;top:553px;width:2px;height:23px;background:#b27ff0"></div>
<div style="left:167px;top:553px;width:2px;height:23px;background:#b27ff0"></div>
<div style="left:96px;top:551px;width:7px;height:7px;background:#fff"></div>
<div style="left:97px;top:552px;width:5px;height:5px;background:#b27ff0"></div>
<div style="left:165px;top:551px;width:7px;height:7px;background:#fff"></div>
<div style="left:166px;top:552px;width:5px;height:5px;background:#b27ff0"></div>
<div style="left:96px;top:572px;width:7px;height:7px;background:#fff"></div>
<div style="left:97px;top:573px;width:5px;height:5px;background:#b27ff0"></div>
<div style="left:165px;top:572px;width:7px;height:7px;background:#fff"></div>
<div style="left:166px;top:573px;width:5px;height:5px;background:#b27ff0"></div>
<div style="left:170px;top:556px;width:50px;height:17px;background:#e9f1fc"></div>
<div style="left:167px;top:553px;width:55px;height:2px;background:#6aa0f0"></div>
<div style="left:167px;top:574px;width:55px;height:2px;background:#6aa0f0"></div>
<div style="left:221px;top:553px;width:2px;height:23px;background:#6aa0f0"></div>
<div style="left:220px;top:552px;width:5px;height:5px;background:#6aa0f0"></div>
<div style="left:220px;top:573px;width:5px;height:5px;background:#6aa0f0"></div>
<div style="left:220px;top:553px;width:57px;height:2px;background:#1f6e3c"></div>
<div style="left:220px;top:574px;width:57px;height:2px;background:#1f6e3c"></div>
<div style="left:220px;top:555px;width:2px;height:19px;background:#1f6e3c"></div>
<div style="left:275px;top:553px;width:2px;height:23px;background:#1f6e3c"></div>
<div style="left:273px;top:572px;width:5px;height:5px;background:#1f6e3c"></div>
<div style="left:220px;top:552px;width:5px;height:5px;background:#6aa0f0"></div>
<div style="left:220px;top:573px;width:5px;height:5px;background:#6aa0f0"></div>
<div class="t" style="left:102.50px;top:497.60px;font-size:13.7px;color:#000;-webkit-text-stroke:0.15px currentColor;transform:scaleX(1.0388);transform-origin:0 0;">Bill</div>
<div class="t" style="left:170.80px;top:497.60px;font-size:13.7px;color:#000;-webkit-text-stroke:0.15px currentColor;">Mon</div>
<div class="t" style="left:229.60px;top:497.60px;font-size:13.7px;color:#000;-webkit-text-stroke:0.15px currentColor;transform:scaleX(0.8295);transform-origin:0 0;">FALSE</div>
<div class="t" style="left:277.60px;top:497.60px;font-size:13.7px;color:#000;-webkit-text-stroke:0.15px currentColor;transform:scaleX(0.9097);transform-origin:0 0;">=HLOOKUP(D19,$C$3:$J$9,MATCH(C19,C$3:$C$9,0),FALSE)</div>
<div class="t" style="left:102.50px;top:517.60px;font-size:13.7px;color:#000;-webkit-text-stroke:0.15px currentColor;transform:scaleX(1.0388);transform-origin:0 0;">Bill</div>
<div class="t" style="left:170.80px;top:517.60px;font-size:13.7px;color:#000;-webkit-text-stroke:0.15px currentColor;transform:scaleX(1.0198);transform-origin:0 0;">Wed</div>
<div class="t" style="left:234.70px;top:517.60px;font-size:13.7px;color:#000;-webkit-text-stroke:0.15px currentColor;transform:scaleX(0.8131);transform-origin:0 0;">TRUE</div>
<div class="t" style="left:277.60px;top:517.60px;font-size:13.7px;color:#000;-webkit-text-stroke:0.15px currentColor;transform:scaleX(0.9097);transform-origin:0 0;">=HLOOKUP(D20,$C$3:$J$9,MATCH(C20,C$3:$C$9,0),FALSE)</div>
<div class="t" style="left:102.50px;top:537.60px;font-size:13.7px;color:#000;-webkit-text-stroke:0.15px currentColor;transform:scaleX(1.0571);transform-origin:0 0;">Jeff</div>
<div class="t" style="left:170.80px;top:537.60px;font-size:13.7px;color:#000;-webkit-text-stroke:0.15px currentColor;">Mon</div>
<div class="t" style="left:234.70px;top:537.60px;font-size:13.7px;color:#000;-webkit-text-stroke:0.15px currentColor;transform:scaleX(0.8131);transform-origin:0 0;">TRUE</div>
<div class="t" style="left:277.60px;top:537.60px;font-size:13.7px;color:#000;-webkit-text-stroke:0.15px currentColor;transform:scaleX(0.9097);transform-origin:0 0;">=HLOOKUP(D21,$C$3:$J$9,MATCH(C21,C$3:$C$9,0),FALSE)</div>
<div class="t" style="left:102.50px;top:557.60px;font-size:13.7px;color:#000;-webkit-text-stroke:0.15px currentColor;transform:scaleX(0.9489);transform-origin:0 0;">Elon</div>
<div class="t" style="left:170.80px;top:557.60px;font-size:13.7px;color:#000;-webkit-text-stroke:0.15px currentColor;transform:scaleX(0.9145);transform-origin:0 0;">Sun</div>
<div class="t" style="left:224.80px;top:557.60px;font-size:13.7px;color:#000;-webkit-text-stroke:0.15px currentColor;transform:scaleX(0.8306);transform-origin:0 0;">FALSE)</div>
<div class="t" style="left:277.60px;top:557.60px;font-size:13.7px;color:#000;-webkit-text-stroke:0.15px currentColor;transform:scaleX(0.9097);transform-origin:0 0;">=HLOOKUP(D22,$C$3:$J$9,MATCH(C22,C$3:$C$9,0),FALSE)</div>
<div class="t" style="left:102.50px;top:577.60px;font-size:13.7px;color:#000;-webkit-text-stroke:0.15px currentColor;transform:scaleX(0.9174);transform-origin:0 0;">Safra</div>
<div class="t" style="left:170.80px;top:577.60px;font-size:13.7px;color:#000;-webkit-text-stroke:0.15px currentColor;transform:scaleX(0.9225);transform-origin:0 0;">Thu</div>
<div class="t" style="left:229.60px;top:577.60px;font-size:13.7px;color:#000;-webkit-text-stroke:0.15px currentColor;transform:scaleX(0.8295);transform-origin:0 0;">FALSE</div>
<div class="t" style="left:277.60px;top:577.60px;font-size:13.7px;color:#000;-webkit-text-stroke:0.15px currentColor;transform:scaleX(0.9097);transform-origin:0 0;">=HLOOKUP(D23,$C$3:$J$9,MATCH(C23,C$3:$C$9,0),FALSE)</div>
<div style="left:737px;top:115px;width:14px;height:14px;background:#4a4a4a"></div>
<svg style="position:absolute;left:739px;top:118px" width="10" height="7"><path d="M0.5 6 L5 1 L9.5 6 Z" fill="#9a9a9a"/></svg>
<div style="left:737px;top:130px;width:14px;height:434px;background:#555555"></div>
<div style="left:737px;top:564px;width:14px;height:22px;background:#333333"></div>
<div style="left:737px;top:586px;width:14px;height:14px;background:#4a4a4a"></div>
<svg style="position:absolute;left:739px;top:591px" width="10" height="7"><path d="M0.5 0.5 L5 5.5 L9.5 0.5 Z" fill="#9a9a9a"/></svg>
<div style="left:751px;top:112px;width:3px;height:488px;background:#202020"></div>
<svg style="position:absolute;left:27px;top:607px" width="40" height="12"><path d="M6.5 1 V10 L2 5.5 Z M30 1 V10 L34.5 5.5 Z" fill="#8c8c8c"/></svg>
<div style="left:101px;top:600px;width:104px;height:23px;background:#fff"></div>
<div style="left:101px;top:622px;width:104px;height:2px;background:#217346"></div>
<div class="t" style="left:113.00px;top:604.60px;font-size:13.7px;color:#1a6a3b;-webkit-text-stroke:0.6px currentColor;transform:scaleX(0.9406);transform-origin:0 0;font-weight:bold;-webkit-text-stroke:0.2px currentColor">simulation23</div>
<svg style="position:absolute;left:236px;top:604px" width="19" height="19" viewBox="0 0 19 19" fill="none" stroke="#e8e8e8" stroke-width="1.4">
<circle cx="9.5" cy="9.5" r="7.6" stroke-width="1.5"/><path d="M9.5 5.3 V13.7 M5.3 9.5 H13.7" stroke-width="2"/></svg>
<div style="left:453px;top:607.5px;width:2.2px;height:2.2px;background:#e8e8e8;border-radius:50%"></div>
<div style="left:453px;top:612px;width:2.2px;height:2.2px;background:#e8e8e8;border-radius:50%"></div>
<div style="left:453px;top:616.5px;width:2.2px;height:2.2px;background:#e8e8e8;border-radius:50%"></div>
<div style="left:470px;top:606px;width:263px;height:14px;background:#333333"></div>
<div style="left:470px;top:606px;width:14px;height:14px;background:#4a4a4a"></div>
<svg style="position:absolute;left:473px;top:608px" width="8" height="10"><path d="M6.5 0.5 V9.5 L1.5 5 Z" fill="#9a9a9a"/></svg>
<div style="left:486px;top:606px;width:41px;height:14px;background:#555555"></div>
<div style="left:719px;top:606px;width:14px;height:14px;background:#4a4a4a"></div>
<svg style="position:absolute;left:722px;top:608px" width="8" height="10"><path d="M1.5 0.5 V9.5 L6.5 5 Z" fill="#9a9a9a"/></svg>
<div class="t" style="left:9.50px;top:630.74px;font-size:12px;color:#f0f0f0;-webkit-text-stroke:0.15px currentColor;transform:scaleX(0.9372);transform-origin:0 0;">Edit</div>
<svg style="position:absolute;left:55px;top:628px" width="22" height="20" viewBox="55 628 22 20" fill="none" stroke="#f2f2f2" stroke-width="1">
<path d="M64 643.5 H59.5 V632.5 H72.5 V637"/><path d="M59.5 634.8 H72.5"/><path d="M61 637.5 H63.5 M61 640 H63.5 M61 642.3 H63.5"/><circle cx="68.8" cy="640.6" r="3.9"/><circle cx="68.8" cy="640.6" r="1.6" fill="#f2f2f2"/></svg>
<svg style="position:absolute;left:452px;top:632px" width="300" height="16" viewBox="452 632 300 16" fill="none" stroke="#5c5c5c" stroke-width="1">
<rect x="455.5" y="632.5" width="14" height="13"/><path d="M455.5 636.8 H469.5 M455.5 641.2 H469.5 M460.2 632.5 V645.5 M464.8 632.5 V645.5"/>
<rect x="496.5" y="632.5" width="13" height="13"/><rect x="499.5" y="635.5" width="7" height="7"/><path d="M500.5 637.5 H505.5 M500.5 639.5 H505.5"/>
<path d="M536.5 645.5 V632.5 H549.5 V645.5"/><path d="M536.5 640.5 H543.5 V632.5"/>
<path d="M569 638.5 H576" stroke="#a8a8a8"/><path d="M686 638.5 H695 M690.5 634 V643" stroke="#a8a8a8"/>
</g></svg>
<div style="left:582px;top:638px;width:100px;height:1px;background:#e0e0e0"></div>
<div style="left:631px;top:635px;width:1px;height:7px;background:#e0e0e0"></div>
<div class="t" style="left:708.00px;top:633.69px;font-size:12.5px;color:#5c5c5c;-webkit-text-stroke:0.15px currentColor;transform:scaleX(0.8562);transform-origin:0 0;">100%</div>
<div style="left:1px;top:599px;width:733px;height:1px;background:#6e6e6e"></div>
<div style="left:1px;top:594px;width:26px;height:1px;background:#3c3c3c"></div>
</body></html>
